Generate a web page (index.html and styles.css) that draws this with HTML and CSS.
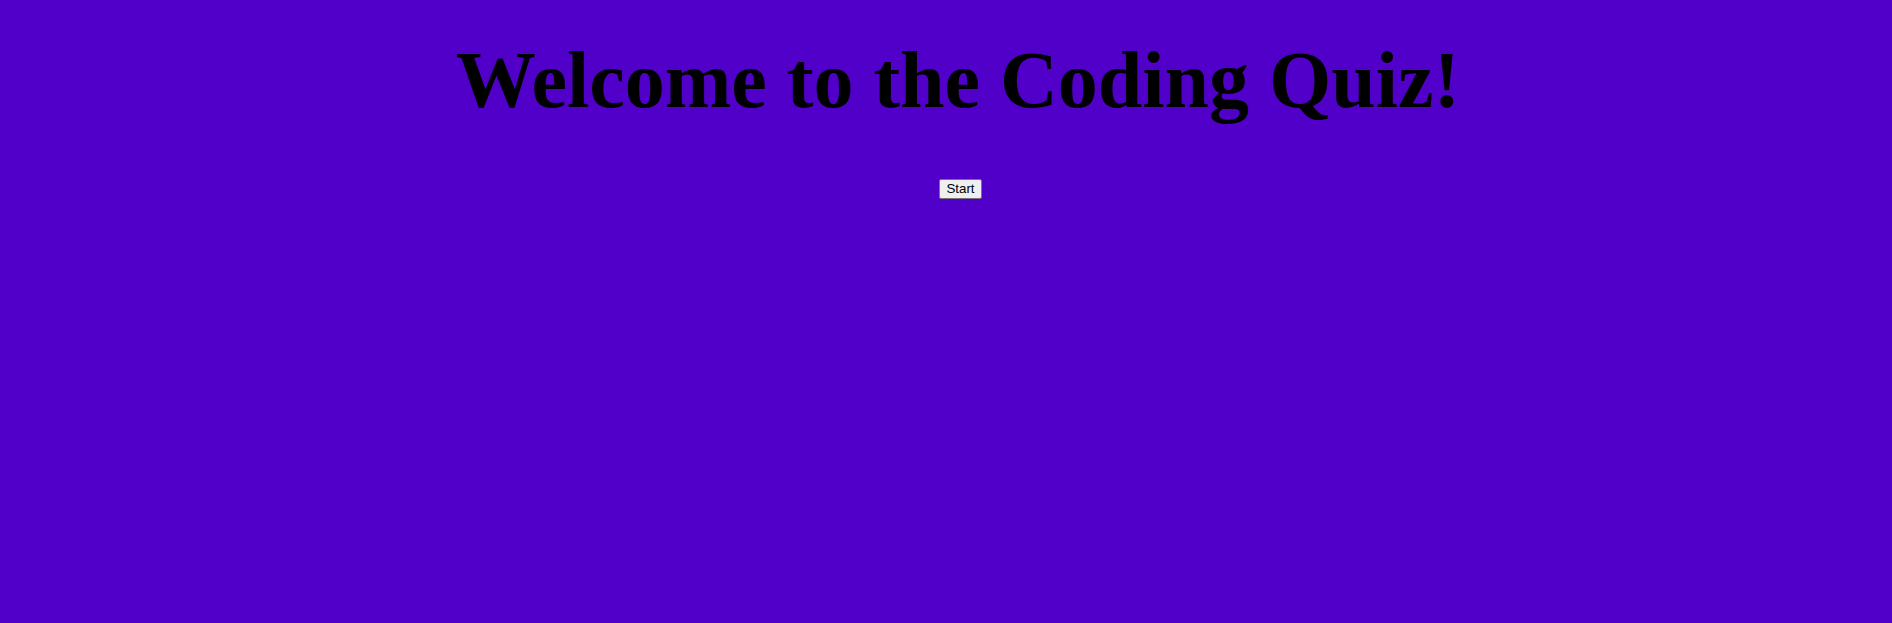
FILE: index.html
```html
<!DOCTYPE html>
<html>
<head>
<meta charset="utf-8">
<link rel="stylesheet" href="styles.css">
</head>
<body>
<main class="quiz">
  <h1 class="title">Welcome to the Coding Quiz!</h1>
  <button class="start">Start</button>
</main>
</body>
</html>
```
FILE: styles.css
```css
html, body {
  height: 100%;
}
body {
  margin: 0;
  background: #5000c8;
  font-family: "Liberation Serif", "Times New Roman", serif;
}
.quiz {
  display: flex;
  flex-direction: column;
  align-items: center;
  padding-left: 24px;
}
.title {
  margin: 34px 0 0;
  font-size: 80px;
  font-weight: bold;
  color: #000;
  line-height: 92px;
}
.start {
  margin: 53px 0 0 5px;
  font-family: "Liberation Sans", Arial, sans-serif;
  font-size: 13.333px;
  line-height: 16px;
  padding: 1px 6px;
  background: #efefef;
  color: #000;
  border: 1px solid #767676;
  border-radius: 2px;
}
```
